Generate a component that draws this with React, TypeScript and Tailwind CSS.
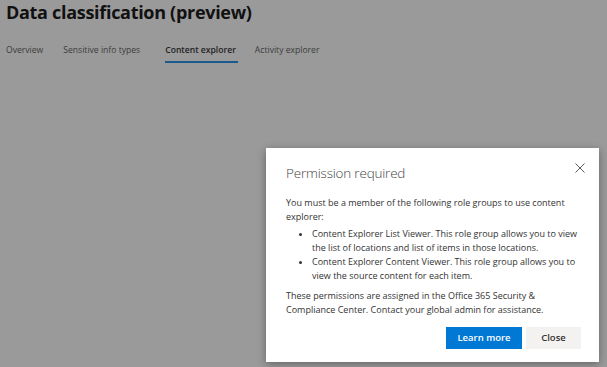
import React from 'react'

const tabs = ['Overview', 'Sensitive info types', 'Content explorer', 'Activity explorer']

function CloseIcon() {
    return (
        <svg width="10" height="10" viewBox="0 0 10 10" fill="none">
            <path d="M0.5 0.5L9.5 9.5M9.5 0.5L0.5 9.5" stroke="#5a5a5a" strokeWidth="1" />
        </svg>
    )
}

export default function App() {
    return (
        <div className="relative h-[367px] w-[607px] overflow-hidden bg-[#9a9a9a] font-['Open_Sans',sans-serif]">
            <div className="pl-[6px]">
                <h1 className="text-[18px] font-bold leading-[24px] tracking-[-0.3px] text-[#111]">Data classification (preview)</h1>
                <div className="mt-[20px] flex gap-[20px] text-[8.6px] leading-[12px] text-[#3c3c3c]">
                    <div className="pb-[5px]">{tabs[0]}</div>
                    <div className="pb-[5px]">{tabs[1]}</div>
                    <div className="ml-[5px] border-b-2 border-[#1c5a8e] pb-[5px] pr-[2px] font-semibold text-[#222]">{tabs[2]}</div>
                    <div className="-ml-[3px] pb-[5px]">{tabs[3]}</div>
                </div>
            </div>

            <div className="absolute left-[266px] top-[148px] w-[333px] bg-white px-[20px] pt-[14px] pb-[13px] text-[#333] shadow-[0_2px_8px_rgba(0,0,0,0.35)]">
                <div className="flex items-start justify-between">
                    <h2 className="text-[13.5px] font-light leading-[22px] tracking-[-0.2px] text-[#444]">Permission required</h2>
                    <button className="mr-[-6px] mt-[1px]"><CloseIcon /></button>
                </div>
                <div className="mt-[12px] text-[9px] leading-[14px]">
                    <p>You must be a member of the following role groups to use content explorer:</p>
                    <ul className="mt-[3px] list-disc pl-[26px]">
                        <li>Content Explorer List Viewer. This role group allows you to view the list of locations and list of items in those locations.</li>
                        <li>Content Explorer Content Viewer. This role group allows you to view the source content for each item.</li>
                    </ul>
                    <p className="mt-[6px]">These permissions are assigned in the Office 365 Security &amp; Compliance Center. Contact your global admin for assistance.</p>
                </div>
                <div className="-mr-[2px] mt-[10px] flex justify-end gap-[4px]">
                    <button className="h-[22px] w-[76px] bg-[#0078d4] text-[9.5px] font-semibold text-white">Learn more</button>
                    <button className="h-[22px] w-[55px] bg-[#f3f2f1] text-[9.5px] font-semibold text-[#333]">Close</button>
                </div>
            </div>
        </div>
    )
}
